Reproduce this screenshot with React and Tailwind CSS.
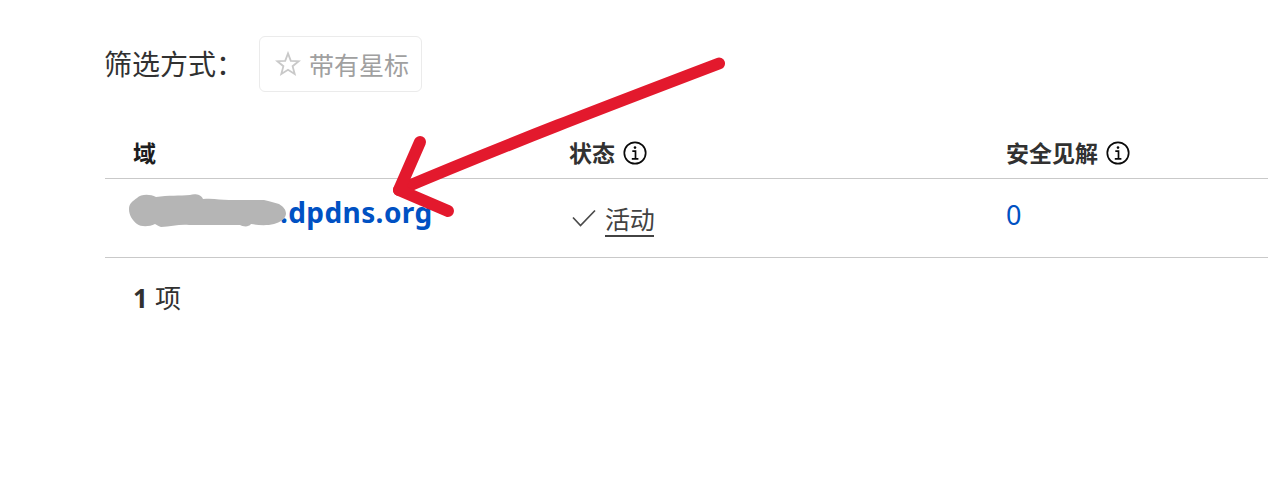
function InfoIcon() {
  return (
    <svg className="mb-px h-6 w-6 shrink-0" viewBox="0 0 24 24" fill="none" stroke="#0a0a0a">
      <circle cx="12" cy="12" r="10.7" strokeWidth="1.7" />
      <path d="M9.3 10.2h3.2v7.6M8.8 17.9h6.6" strokeWidth="1.7" />
      <circle cx="12" cy="6.6" r="1.3" fill="#0a0a0a" stroke="none" />
    </svg>
  );
}

function HeaderCell({ label, info }) {
  return (
    <div className="-mt-px flex h-[49px] items-center gap-2 pl-7 text-[23px] font-bold text-[#313131]">
      <span className={info ? "-ml-px" : "text-[#1d1d1d]"}>{label}</span>
      {info && <InfoIcon />}
    </div>
  );
}

function Arrow() {
  return (
    <svg
      className="pointer-events-none absolute left-0 top-0 h-[501px] w-[1268px]"
      viewBox="0 0 1268 501"
      fill="none"
      stroke="#e3192d"
      strokeWidth="12"
      strokeLinecap="round"
      strokeLinejoin="round"
    >
      <path d="M719 63.5C610 105 505 145 399 190" />
      <path d="M420 142L399 190L448 211" />
    </svg>
  );
}

export default function App() {
  return (
    <main className="relative h-[501px] w-full overflow-hidden bg-white pl-[105px] pt-9 font-['Noto_Sans','Noto_Sans_CJK_SC',sans-serif] text-[#313131]">
      <div className="flex h-14 items-center">
        <span className="-ml-px mr-px w-[154px] whitespace-nowrap text-[28px] leading-9">筛选方式：</span>
        <button className="flex h-14 w-[163px] items-center gap-2 rounded-md border border-[#ebebeb] pl-[15px] text-[25px] leading-8 text-[#a0a0a0]">
          <svg className="h-[26px] w-[26px] shrink-0" viewBox="0 0 26 26" fill="none" stroke="#c9c9c9" strokeWidth="1.8">
            <path d="M13 2.4L15.8 9.8L23.7 10.2L17.6 15.2L19.7 23L13 18.7L6.3 23L8.4 15.2L2.3 10.2L10.2 9.8Z" />
          </svg>
          <span className="whitespace-nowrap pt-px">带有星标</span>
        </button>
      </div>

      <section className="mt-[38px]">
        <div className="grid grid-cols-[437px_437px_1fr] border-b border-[#c9c9c9]">
          <HeaderCell label="域" />
          <HeaderCell label="状态" info />
          <HeaderCell label="安全见解" info />
        </div>
        <div className="grid h-[79px] grid-cols-[437px_437px_1fr] border-b border-[#c9c9c9]">
          <div className="flex items-start pl-6 pt-[15px]">
            <svg className="relative z-10 h-9 w-[158px] shrink-0" viewBox="0 0 158 36" fill="#b5b5b5">
              <path d="M0 15C0 9 4 7 8 4C12 0 21 0 27 3C39 1 51 2 61 1C65-.5 72 0 74 5C85 4 91 6 100 6H135C141 7 145 9 150 10C155 13 157 16 157 20C156 26 151 28 145 30C137 32 128 31 122 30C119 34 113 32 111 31H60C50 30 42 33 32 33C29 32 28 31 26 30C20 33 12 33 8 30C3 26 0 21 0 15Z" />
            </svg>
            <a className="-ml-[7px] text-[28px] font-bold leading-9 tracking-[0.4px] text-[#0051c3]">.dpdns.org</a>
          </div>
          <div className="flex items-start pl-[30px] pt-6">
            <svg className="mt-[5px] h-[22px] w-6 shrink-0" viewBox="0 0 24 22" fill="none" stroke="#4a4a4a" strokeWidth="1.7">
              <path d="M1 9.5L8.5 17.5L23 2.5" />
            </svg>
            <span className="ml-[9px] h-[34px] border-b-2 border-[#424242] text-[25px] leading-8 tracking-[-0.3px] text-[#424242]">活动</span>
          </div>
          <div className="pl-[27px] pt-[18px] text-[27px] leading-9 text-[#0051c3]">0</div>
        </div>
        <div className="flex items-center gap-[7px] pl-7 pt-[22px] text-[26px] leading-9">
          <strong>1</strong>
          <span>项</span>
        </div>
      </section>
      <Arrow />
    </main>
  );
}
